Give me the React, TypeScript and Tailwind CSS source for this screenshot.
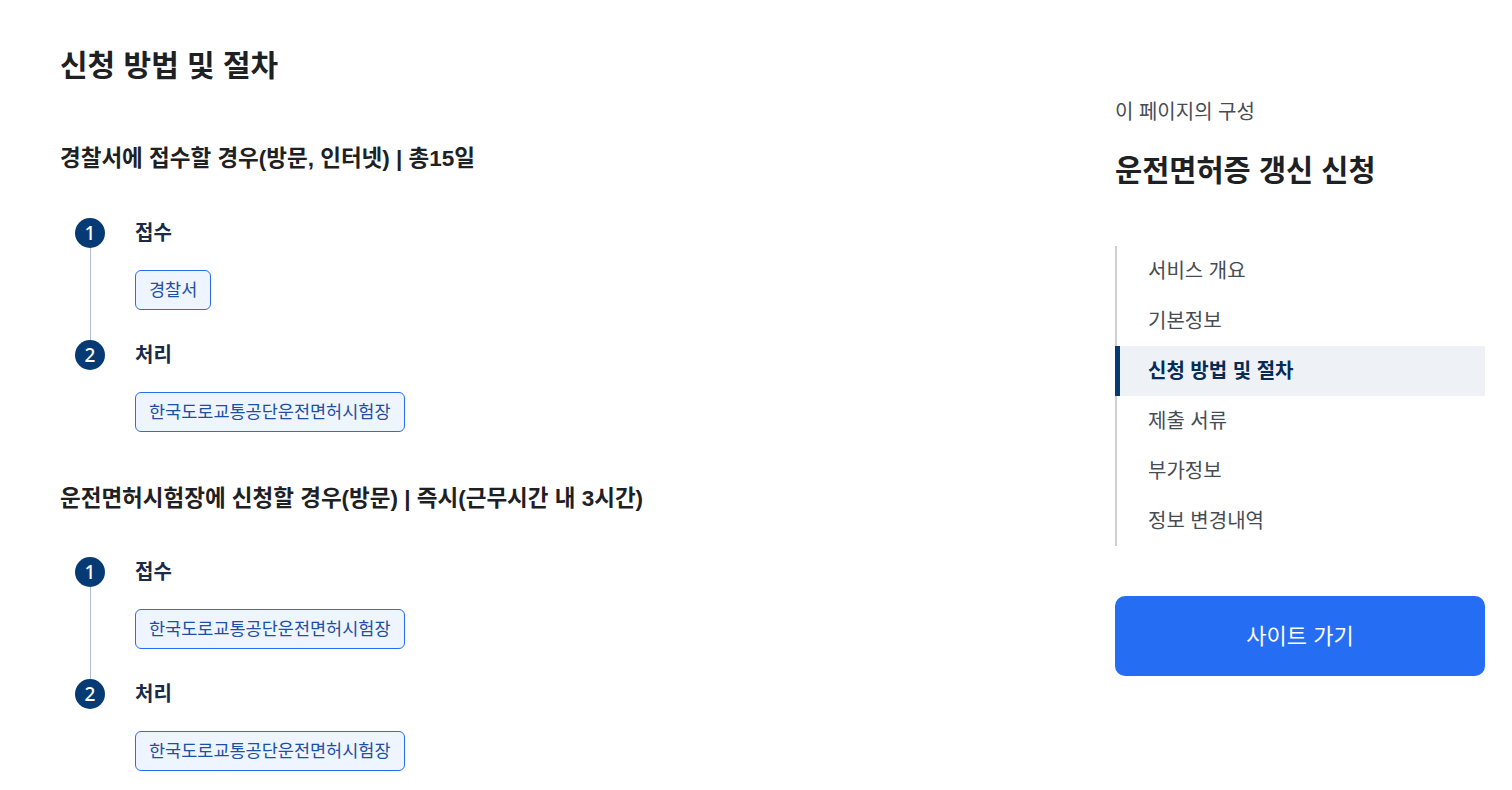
const font = { fontFamily: '"Liberation Sans", "Noto Sans CJK KR", sans-serif' }

interface Step {
  title: string
  place: string
}

interface Section {
  heading: string
  steps: Step[]
}

const sections: Section[] = [
  {
    heading: '경찰서에 접수할 경우(방문, 인터넷) | 총15일',
    steps: [
      { title: '접수', place: '경찰서' },
      { title: '처리', place: '한국도로교통공단운전면허시험장' },
    ],
  },
  {
    heading: '운전면허시험장에 신청할 경우(방문) | 즉시(근무시간 내 3시간)',
    steps: [
      { title: '접수', place: '한국도로교통공단운전면허시험장' },
      { title: '처리', place: '한국도로교통공단운전면허시험장' },
    ],
  },
]

const navItems = ['서비스 개요', '기본정보', '신청 방법 및 절차', '제출 서류', '부가정보', '정보 변경내역']

function StepList({ steps, first }: { steps: Step[]; first: boolean }) {
  return (
    <ol className={first ? 'mt-[44px] flex flex-col pl-[15px]' : 'mt-[43px] flex flex-col pl-[15px]'}>
      {steps.map((step, i) => {
        const last = i === steps.length - 1
        return (
          <li key={i} className="flex gap-[30px]">
            <div className="flex w-[30px] shrink-0 flex-col items-center">
              <span className="flex h-[30px] w-[30px] items-center justify-center rounded-full bg-[#063a74] font-['Noto_Sans'] text-[19px] leading-none font-medium text-white">
                {i + 1}
              </span>
              {!last && <span className="w-px flex-1 bg-[#b1bfd4]" />}
            </div>
            <div className={last ? 'pb-0' : 'pb-[30px]'}>
              <div className="flex h-[30px] items-center text-[20px] font-bold text-[#1b2a48]">
                {step.title}
              </div>
              <div className="mt-[22px] inline-flex h-[40px] items-center rounded-[6px] border border-[#256ef4] bg-[#eff5ff] px-[13px] text-[17.5px] text-[#1d4fa3]">
                {step.place}
              </div>
            </div>
          </li>
        )
      })}
    </ol>
  )
}

export default function App() {
  return (
    <div className="flex min-h-[790px] bg-white pr-[27px] pl-[60px] text-[#1e2124]" style={font}>
      <main className="flex-1 pt-[46px]">
        <h1 className="text-[30px] leading-[40px] font-bold">신청 방법 및 절차</h1>
        {sections.map((section, i) => (
          <section key={i} className={i === 0 ? 'mt-[58px]' : 'mt-[52px]'}>
            <h2 className="text-[22.5px] leading-[30px] font-bold">{section.heading}</h2>
            <StepList steps={section.steps} first={i === 0} />
          </section>
        ))}
      </main>

      <aside className="w-[370px] shrink-0 pt-[98px]">
        <p className="text-[20px] leading-[28px] text-[#464c53]">이 페이지의 구성</p>
        <h2 className="mt-[25px] text-[29.5px] leading-[40px] font-bold">운전면허증 갱신 신청</h2>
        <nav className="mt-[55px] border-l-2 border-[#cdd1d5]">
          {navItems.map((item) => {
            const active = item === '신청 방법 및 절차'
            return (
              <a
                key={item}
                className={
                  active
                    ? '-ml-[2px] flex h-[50px] items-center border-l-[5px] border-[#063a74] bg-[#eef2f7] pl-[28px] text-[20px] font-bold text-[#052b57]'
                    : 'flex h-[50px] items-center pl-[31px] text-[20px] text-[#464c53]'
                }
              >
                {item}
              </a>
            )
          })}
        </nav>
        <button className="mt-[50px] flex h-[80px] w-full items-center justify-center rounded-[10px] bg-[#256ef4] text-[22px] text-white">
          사이트 가기
        </button>
      </aside>
    </div>
  )
}
